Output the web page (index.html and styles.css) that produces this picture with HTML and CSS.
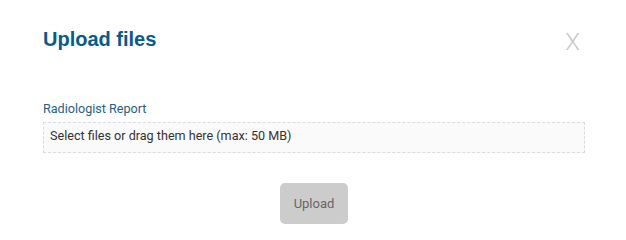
FILE: index.html
```html
<!DOCTYPE html>
<html lang="en">
<head>
<meta charset="utf-8">
<title>Upload files</title>
<link rel="stylesheet" href="styles.css">
</head>
<body>
<div class="modal">
  <div class="modal-header">
    <h1 class="modal-title">Upload files</h1>
    <button class="close" type="button">X</button>
  </div>
  <div class="field">
    <label class="field-label">Radiologist Report</label>
    <div class="dropzone">Select files or drag them here (max: 50 MB)</div>
  </div>
  <div class="actions">
    <button class="btn-upload" type="button">Upload</button>
  </div>
</div>
</body>
</html>
```
FILE: styles.css
```css
html, body {
  margin: 0;
  padding: 0;
  background: #ffffff;
}
body {
  font-family: Roboto, "Liberation Sans", Arial, sans-serif;
}
.modal {
  padding: 27px 41px 0 43px;
}
.modal-header {
  display: flex;
  justify-content: space-between;
  align-items: flex-start;
}
.modal-title {
  margin: 0;
  font-family: "Liberation Sans", Arial, sans-serif;
  font-weight: 700;
  font-size: 20px;
  line-height: 24px;
  color: #075b88;
}
.close {
  margin: 1px 5px 0 0;
  padding: 0;
  border: 0;
  background: none;
  font-family: Roboto, sans-serif;
  font-weight: 300;
  font-size: 24px;
  line-height: 28px;
  color: #c8c8c8;
}
.field {
  margin-top: 45px;
}
.field-label {
  display: block;
  font-size: 12.6px;
  line-height: 16px;
  color: #285e82;
}
.dropzone {
  margin-top: 5px;
  border: 1px dashed #dcdcdc;
  background: #fafafa;
  padding: 5px 6px 8px 6px;
  font-size: 12.6px;
  line-height: 16px;
  color: #333333;
}
.actions {
  display: flex;
  justify-content: center;
  margin-top: 30px;
}
.btn-upload {
  width: 68px;
  height: 41px;
  border: 0;
  border-radius: 5px;
  background: #cccccc;
  font-family: Roboto, sans-serif;
  font-size: 13px;
  color: #666666;
  padding: 0;
}
```
